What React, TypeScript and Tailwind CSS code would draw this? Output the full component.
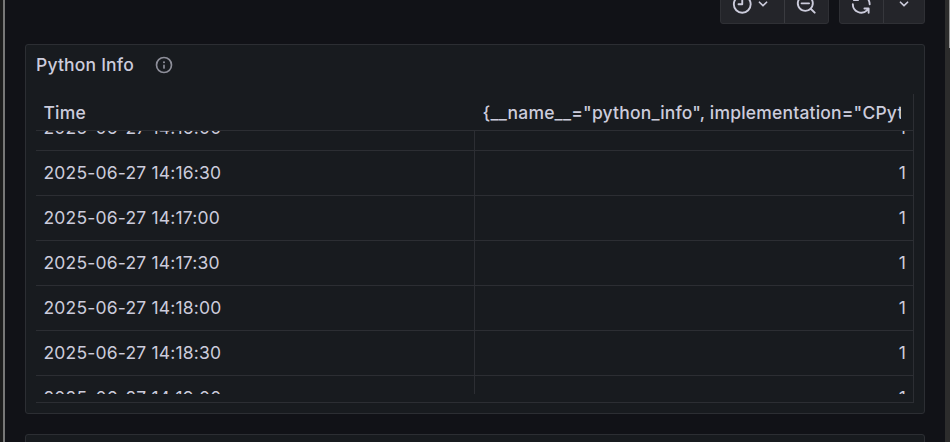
const paths = {
  clock:
    'M12,2A10,10,0,1,0,22,12,10,10,0,0,0,12,2Zm0,18a8,8,0,1,1,8-8A8,8,0,0,1,12,20ZM12,6a1,1,0,0,0-1,1v4H8a1,1,0,0,0,0,2h4a1,1,0,0,0,1-1V7A1,1,0,0,0,12,6Z',
  zoomOut:
    'M21.71,20.29,18,16.61A9,9,0,1,0,16.61,18l3.68,3.68a1,1,0,0,0,1.42,0A1,1,0,0,0,21.71,20.29ZM11,18a7,7,0,1,1,7-7A7,7,0,0,1,11,18Zm4-8H7a1,1,0,0,0,0,2h8a1,1,0,0,0,0-2Z',
  sync: 'M19.91,15.51H15.38a1,1,0,0,0,0,2h2.4A8,8,0,0,1,4,12a1,1,0,1,0-2,0,10,10,0,0,0,16.88,7.23V21a1,1,0,0,0,2,0V16.5A1,1,0,0,0,19.91,15.51ZM12,2A10,10,0,0,0,5.12,4.77V3a1,1,0,0,0-2,0V7.5a1,1,0,0,0,1,1h4.5a1,1,0,0,0,0-2H6.22A8,8,0,0,1,20,12a1,1,0,0,0,2,0A10,10,0,0,0,12,2Z',
  down: 'M17,9.17a1,1,0,0,0-1.41,0L12,12.71,8.46,9.17a1,1,0,0,0-1.41,0,1,1,0,0,0,0,1.42l4.24,4.24a1,1,0,0,0,1.42,0L17,10.59A1,1,0,0,0,17,9.17Z',
  info: 'M12,2A10,10,0,1,0,22,12,10,10,0,0,0,12,2Zm0,18a8,8,0,1,1,8-8A8,8,0,0,1,12,20Zm0-8.5a1,1,0,0,0-1,1v3a1,1,0,0,0,2,0v-3A1,1,0,0,0,12,11.5Zm0-4a1.25,1.25,0,1,0,1.25,1.25A1.25,1.25,0,0,0,12,7.5Z',
};

function Icon({ name, className }: { name: keyof typeof paths; className: string }) {
  return (
    <svg viewBox="0 0 24 24" fill="currentColor" className={`shrink-0 ${className}`} aria-hidden="true">
      <path d={paths[name]} />
    </svg>
  );
}

const rows = ['14:16:00', '14:16:30', '14:17:00', '14:17:30', '14:18:00', '14:18:30', '14:19:00'];

function Toolbar() {
  return (
    <div className="-mt-4 flex h-10 shrink-0 justify-end gap-2.5 pr-5">
      <div className="flex w-[109px] rounded-[3px] border border-[#2f3035] bg-[#24252a]">
        <button className="flex w-16 items-center border-r border-[#3a3b40] pl-[10px]">
          <Icon name="clock" className="size-[22.5px]" />
          <Icon name="down" className="-ml-px size-5" />
        </button>
        <button className="flex flex-1 items-center justify-center">
          <Icon name="zoomOut" className="size-[22.5px]" />
        </button>
      </div>
      <div className="flex w-[86px] rounded-[3px] border border-[#2f3035] bg-[#24252a]">
        <button className="flex w-11 items-center justify-center border-r border-[#36373c]">
          <Icon name="sync" className="size-[22.5px]" />
        </button>
        <button className="flex flex-1 items-center justify-center">
          <Icon name="down" className="size-5" />
        </button>
      </div>
    </div>
  );
}

function InfoTable() {
  return (
    <div className="mr-2.5 ml-2.5 flex h-[309px] flex-col border-b border-[#2c2e33]">
      <div className="flex min-h-0 flex-1 flex-col border-r border-[#2c2e33]">
        <div className="flex h-[37px] shrink-0 items-center border-b border-[#2c2e33] pt-px font-medium">
          <div className="w-[439px] pl-[7.5px]">Time</div>
          <div className="mr-3 ml-[7.5px] min-w-0 flex-1 overflow-hidden whitespace-nowrap">
            {'{__name__="python_info", implementation="CPython", major="3"}'}
          </div>
        </div>
        <div className="h-[263px] shrink-0 overflow-hidden">
          <div className="-mt-[25px]">
            {rows.map((time) => (
              <div key={time} className="flex h-[45px] border-b border-[#2c2e33]">
                <div className="flex w-[439px] items-center border-r border-[#2c2e33] pb-px pl-[7.5px]">
                  2025-06-27 {time}
                </div>
                <div className="flex flex-1 items-center justify-end pr-[7px] pb-px">1</div>
              </div>
            ))}
          </div>
        </div>
      </div>
    </div>
  );
}

export default function App() {
  return (
    <div className="flex h-[442px] w-[950px] overflow-hidden bg-[#111217] font-['Inter',sans-serif] text-[17.5px] leading-[27.5px] tracking-[0.01071em] text-[#ccccdc]">
      <div className="w-[5px] shrink-0 border-r-2 border-[#777777] bg-[#1c1c1c]" />
      <main className="flex w-[940px] shrink-0 flex-col">
        <Toolbar />
        <div className="mt-5 mr-5 ml-5 flex shrink-0 flex-col gap-5">
          <section className="h-[370px] rounded-[3px] border border-[#2c2e33] bg-[#181b1f]">
            <header className="flex h-[49px] items-start pt-[6px] pl-2.5">
              <h2 className="font-medium">Python Info</h2>
              <Icon name="info" className="mt-1 ml-5 size-5 text-[#8e8f9a]" />
            </header>
            <InfoTable />
          </section>
          <section className="h-20 rounded-[3px] border border-[#2c2e33] bg-[#181b1f]" />
        </div>
      </main>
      <div className="flex w-[5px] shrink-0 justify-end bg-[#2c2c2c]">
        <div className="h-12 w-px bg-[#9a9a9a]" />
      </div>
    </div>
  );
}
